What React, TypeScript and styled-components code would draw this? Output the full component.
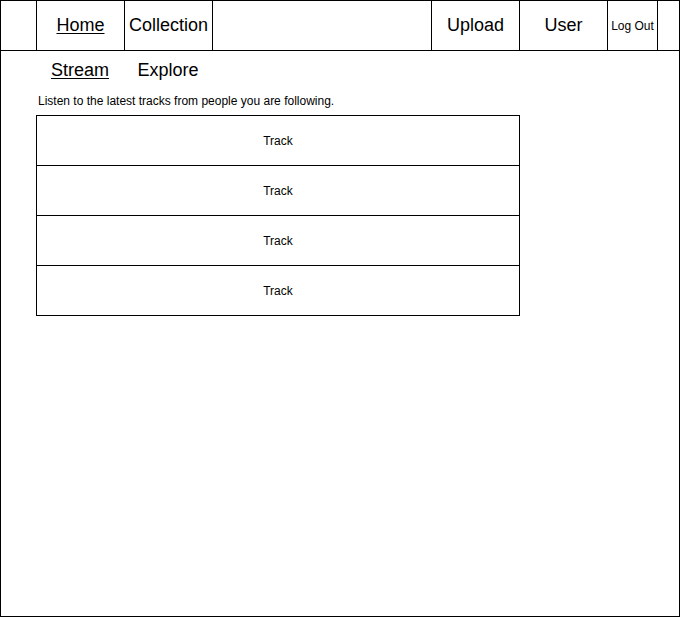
import React, { FC } from 'react'
import styled, { createGlobalStyle } from 'styled-components'

const GlobalStyle = createGlobalStyle`
    html, body {
        margin: 0;
        padding: 0;
        background: #ffffff;
    }
    body {
        font-family: 'Liberation Sans', Arial, Helvetica, sans-serif;
        color: #000000;
    }
`

export const Frame = styled.div`
    width: 680px;
    height: 617px;
    box-sizing: border-box;
    border: 1px solid #000000;
    display: flex;
    flex-direction: column;
`

export const Header = styled.header`
    height: 50px;
    box-sizing: border-box;
    border-bottom: 1px solid #000000;
    display: flex;
    align-items: stretch;
`

export const Spacer = styled.div<{ $width?: number; $bordered?: boolean }>`
    box-sizing: border-box;
    ${({ $width }) => ($width ? `width: ${$width}px; flex-shrink: 0;` : 'flex: 1;')}
    ${({ $bordered }) => ($bordered ? 'border-left: 1px solid #000000;' : '')}
`

export const NavCell = styled.a<{ $width?: number; $active?: boolean; $small?: boolean }>`
    width: ${({ $width }) => $width ?? 88}px;
    flex-shrink: 0;
    box-sizing: border-box;
    border-left: 1px solid #000000;
    display: flex;
    justify-content: center;
    align-items: center;
    font-size: ${({ $small }) => ($small ? 12 : 18)}px;
    color: #000000;
    text-decoration: ${({ $active }) => ($active ? 'underline' : 'none')};
    text-underline-offset: 2px;
    white-space: nowrap;
    cursor: pointer;
`

export const SubNav = styled.nav`
    height: 39px;
    padding-left: 35px;
    display: flex;
`

export const Tab = styled.a<{ $active?: boolean }>`
    width: 88px;
    display: flex;
    justify-content: center;
    align-items: center;
    font-size: 18px;
    color: #000000;
    text-decoration: ${({ $active }) => ($active ? 'underline' : 'none')};
    text-underline-offset: 2px;
    cursor: pointer;
`

export const Description = styled.p`
    margin: 4px 0 7px 0;
    padding: 0 0 0 37px;
    font-size: 12px;
    line-height: 14px;
`

export const TrackList = styled.ul`
    margin: 0 0 0 35px;
    padding: 0;
    list-style: none;
    width: 484px;
    box-sizing: border-box;
    border: 1px solid #000000;
`

export const TrackRow = styled.li`
    height: 50px;
    box-sizing: border-box;
    display: flex;
    justify-content: center;
    align-items: center;
    font-size: 12px;
    &:first-child {
        height: 49px;
    }
    & + & {
        border-top: 1px solid #000000;
    }
`

const tracks = ['Track', 'Track', 'Track', 'Track']

const App: FC = () => {
    return (
        <>
            <GlobalStyle />
            <Frame>
                <Header>
                    <Spacer $width={35} />
                    <NavCell $active>Home</NavCell>
                    <NavCell>Collection</NavCell>
                    <Spacer $bordered />
                    <NavCell>Upload</NavCell>
                    <NavCell>User</NavCell>
                    <NavCell $width={50} $small>
                        Log Out
                    </NavCell>
                    <Spacer $width={22} $bordered />
                </Header>
                <SubNav>
                    <Tab $active>Stream</Tab>
                    <Tab>Explore</Tab>
                </SubNav>
                <Description>Listen to the latest tracks from people you are following.</Description>
                <TrackList>
                    {tracks.map((track, i) => (
                        <TrackRow key={i}>{track}</TrackRow>
                    ))}
                </TrackList>
            </Frame>
        </>
    )
}

export default App
